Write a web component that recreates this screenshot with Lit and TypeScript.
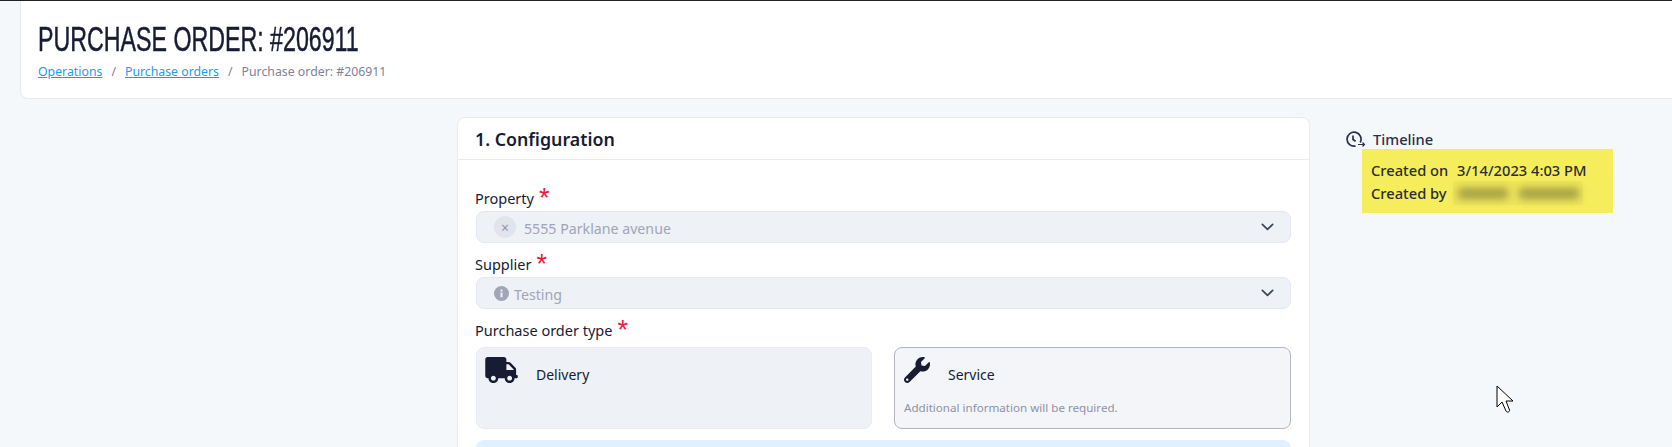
import { LitElement, html, css, svg } from "lit";
import { customElement } from "lit/decorators.js";

const chevron = html`<svg class="chev" viewBox="0 0 14 9" width="13" height="8" aria-hidden="true"><path d="M1.200 1.500 7 7.200l5.800-5.700" fill="none" stroke="#3f4254" stroke-width="1.900" stroke-linecap="round" stroke-linejoin="round"/></svg>`;
const truck = svg`<path d="M624 352h-16V243.9c0-12.7-5.1-24.9-14.1-33.9L494 110.1c-9-9-21.2-14.1-33.9-14.1H416V48c0-26.5-21.5-48-48-48H48C21.5 0 0 21.5 0 48v320c0 26.5 21.5 48 48 48h16c0 53 43 96 96 96s96-43 96-96h128c0 53 43 96 96 96s96-43 96-96h48c8.8 0 16-7.2 16-16v-32c0-8.8-7.2-16-16-16zM160 464c-26.5 0-48-21.5-48-48s21.5-48 48-48 48 21.5 48 48-21.5 48-48 48zm320 0c-26.5 0-48-21.5-48-48s21.5-48 48-48 48 21.5 48 48-21.5 48-48 48zm80-208H416V144h44.1l99.9 99.9V256z"/>`;
const wrench = svg`<path d="M507.73 109.1c-2.24-9.03-13.54-12.09-20.12-5.51l-74.36 74.36-67.88-11.31-11.31-67.88 74.36-74.36c6.62-6.62 3.43-17.9-5.66-20.16-47.38-11.74-99.55.91-136.58 37.93-39.64 39.64-50.55 97.1-34.05 147.2L18.74 402.76c-24.99 24.99-24.99 65.51 0 90.5 24.99 24.99 65.51 24.99 90.5 0l213.21-213.21c50.12 16.71 107.47 5.68 147.37-34.22 37.07-37.07 49.7-89.32 37.91-136.73zM64 472c-13.25 0-24-10.75-24-24 0-13.26 10.75-24 24-24s24 10.74 24 24c0 13.25-10.75 24-24 24z"/>`;

@customElement("app-root")
export class AppRoot extends LitElement {
  static styles = css`
    :host { display: block; height: 447px; overflow: hidden; position: relative; background: #f5f8fa; font-family: "Noto Sans", sans-serif; color: #181c32; border-top: 1px solid #222; box-sizing: border-box; }
    .page-head { margin-left: 20px; height: 98px; box-sizing: border-box; background: #fff; border: 1px solid #e9ebf0; border-top: 0; border-right: 0; border-bottom-left-radius: 8px; padding: 18px 0 0 17px; }
    h1 { margin: 0; font: 400 35px/40px "Liberation Sans", sans-serif; -webkit-text-stroke: .5px #181c32; color: #181c32; transform: scaleX(.663); transform-origin: left; white-space: nowrap; }
    .crumbs { display: flex; gap: 9px; margin-top: 4px; font-size: 12.300px; line-height: 18px; color: #7e8299; }
    .crumbs a { color: #1d9bf0; text-decoration: underline; }
    .main { display: flex; align-items: flex-start; margin: 18px 0 0 457px; }
    .card { width: 853px; flex: none; box-sizing: border-box; background: #fff; border: 1px solid #e9ebf0; border-radius: 8px 8px 0 0; height: 340px; }
    .card-head { height: 42px; box-sizing: border-box; border-bottom: 1px solid #e9ebf0; padding: 0 17px; font-size: 17.800px; font-weight: 600; line-height: 42px; }
    .body { padding: 31px 18px 0; }
    .label { font-size: 14.500px; line-height: 14px; height: 20px; display: flex; gap: 5px; margin-left: -1px; }
    .star { color: #f1173f; font-size: 27px; line-height: 14px; font-family: "Liberation Sans", sans-serif; }
    .select { height: 32px; box-sizing: border-box; background: #eef1f5; border: 1px solid #e4e7ee; border-radius: 8px; display: flex; align-items: center; padding: 0 16px 0 17px; color: #a1a5b7; font-size: 14.200px; margin: 0 0 14px; }
    .select span { flex: 1; padding-top: 2px; }
    .chip { width: 22px; height: 22px; border-radius: 50%; background: #e2e4ed; color: #8f93a8; display: flex; align-items: center; justify-content: center; margin-right: 8px; font-size: 14px; flex: none; }
    .info { width: 15px; height: 15px; margin-right: 5px; flex: none; }
    .types { display: grid; grid-template-columns: 396px 397px; gap: 22px; margin-top: 4px; }
    .type { height: 82px; box-sizing: border-box; border-radius: 8px; padding: 9px; background: #eef1f5; border: 1px solid #e9ecf1; display: flex; flex-direction: column; justify-content: space-between; }
    .type.active { background: #f4f5f9; border-color: #b5b5c3; }
    .row { display: flex; align-items: center; font-size: 14px; height: 26px; margin-left: -1px; }
    .type.active .row { margin-left: 0; }
    .row svg { fill: #181c32; height: 26px; flex: none; }
    .type .t { margin-left: 18px; position: relative; top: 4px; }
    .note { font-size: 11.600px; line-height: 16px; color: #8f91a6; margin-bottom: 3px; }
    .notice { height: 30px; margin-top: 11px; background: #e1f0ff; border-radius: 8px; }
    aside { margin-left: 35px; padding-top: 13px; }
    .tl-head { display: flex; align-items: center; gap: 7px; font-size: 14.700px; font-weight: 500; color: #2b2f4a; height: 18px; }
    .tl { margin: 1px 0 0 17px; width: 251px; height: 64px; box-sizing: border-box; background: #f6ed5c; padding: 10px 9px; font-size: 14.700px; font-weight: 500; line-height: 22px; color: #2b2d33; white-space: nowrap; }
    .tl .val { margin-left: 5px; }
    .by { display: flex; align-items: center; }
    .blur { margin-left: 6px; width: 130px; height: 24px; background: #efe65a; display: flex; align-items: center; gap: 11px; padding-left: 5px; box-sizing: border-box; }
    .blur i { display: block; height: 11px; background: #8f8a3e; filter: blur(4px); opacity: .8; flex: none; }
    .cursor { position: absolute; left: 1496px; top: 384px; }
  `;

  render() {
    return html`
      <header class="page-head">
        <h1>PURCHASE ORDER: #206911</h1>
        <div class="crumbs"><a>Operations</a><span>/</span><a>Purchase orders</a><span>/</span><span>Purchase order: #206911</span></div>
      </header>
      <div class="main">
        <section class="card">
          <div class="card-head">1. Configuration</div>
          <div class="body">
            <div class="label">Property <span class="star">*</span></div>
            <div class="select"><div class="chip">×</div><span>5555 Parklane avenue</span>${chevron}</div>
            <div class="label">Supplier <span class="star">*</span></div>
            <div class="select">
              <svg class="info" viewBox="0 0 16 16"><circle cx="8" cy="8" r="8" fill="#a1a5b7"/><rect x="6.900" y="7" width="2.200" height="5" fill="#eef1f5"/><rect x="6.900" y="3.800" width="2.200" height="2.100" fill="#eef1f5"/></svg>
              <span>Testing</span>${chevron}
            </div>
            <div class="label">Purchase order type <span class="star">*</span></div>
            <div class="types">
              <div class="type"><div class="row"><svg viewBox="0 0 640 512" width="33">${truck}</svg><span class="t">Delivery</span></div></div>
              <div class="type active"><div class="row"><svg viewBox="0 0 512 512" width="26">${wrench}</svg><span class="t">Service</span></div><div class="note">Additional information will be required.</div></div>
            </div>
            <div class="notice"></div>
          </div>
        </section>
        <aside>
          <div class="tl-head">
            <svg width="21" height="17" viewBox="0 0 21 17" fill="none" stroke="#2b2f4a" stroke-width="1.700"><path d="M15.200 11.500A7 7 0 1 0 10.600 15"/><path d="M8 4.500V8.500l2.600 1.800"/><path d="M13 13.500h6.500M17.500 11.500l2 2-2 2" stroke-width="1.200"/></svg>
            Timeline
          </div>
          <div class="tl">
            <div>Created on <span class="val">3/14/2023 4:03 PM</span></div>
            <div class="by">Created by <div class="blur"><i style="width:50px"></i><i style="width:60px"></i></div></div>
          </div>
        </aside>
      </div>
      <svg class="cursor" width="20" height="30" viewBox="0 0 20 30"><path d="M1 1v21l5-5 4 9c1 2 4 1 3.500-1L10 16h7z" fill="#fff" stroke="#000" stroke-width="1"/></svg>
    `;
  }
}
